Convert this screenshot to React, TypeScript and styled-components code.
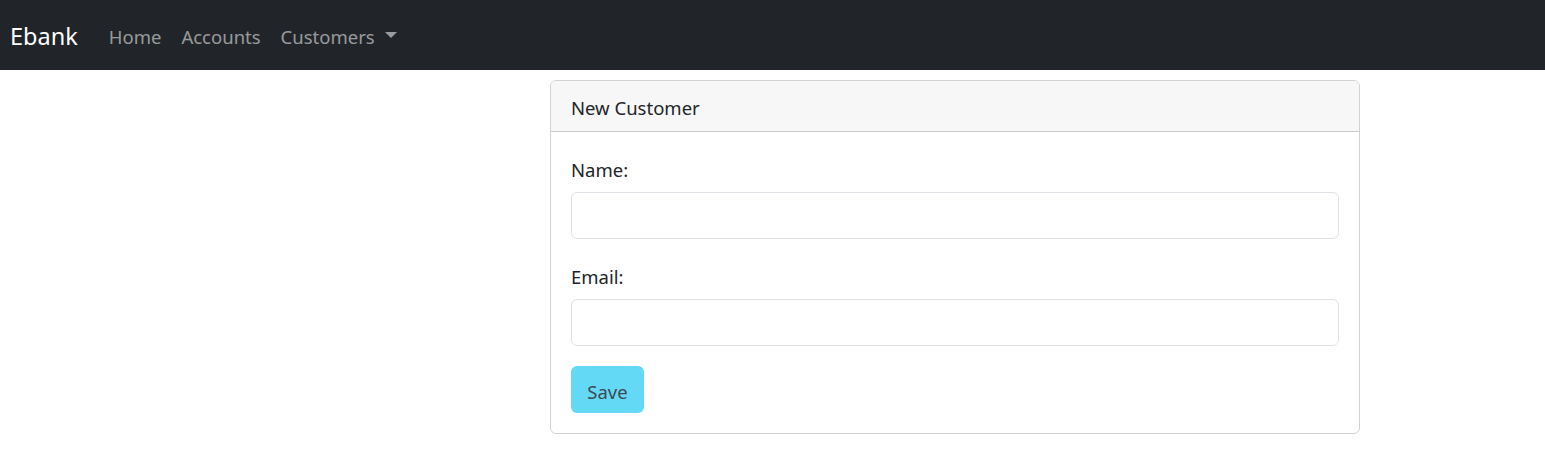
import React from 'react'
import styled, { createGlobalStyle } from 'styled-components'

const GlobalStyle = createGlobalStyle`
    body {
        margin: 0;
        font-family: "Noto Sans", "Open Sans", sans-serif;
        font-size: 18.5px;
        color: #212529;
        background: #fff;
    }
    * { box-sizing: border-box; }
`

const NavBar = styled.nav`
    height: 70px;
    background: #212529;
    display: flex;
    align-items: center;
    padding: 2px 10px 0;
`

const Brand = styled.a`
    color: #fff;
    font-size: 23.5px;
    text-decoration: none;
    margin-right: 21px;
`

const NavLink = styled.a`
    color: rgba(255, 255, 255, 0.55);
    text-decoration: none;
    padding: 0 10px;
    display: flex;
    align-items: center;
`

const Caret = styled.span`
    display: inline-block;
    margin-left: 10px;
    border-top: 6px solid rgba(255, 255, 255, 0.55);
    border-left: 6px solid transparent;
    border-right: 6px solid transparent;
    margin-top: -3px;
`

const Main = styled.main`
    padding: 10px 185px 0 550px;
`

const Card = styled.div`
    border: 1px solid rgba(0, 0, 0, 0.175);
    border-radius: 6px;
    overflow: hidden;
`

const CardHeader = styled.div`
    background: #f7f7f7;
    border-bottom: 1px solid rgba(0, 0, 0, 0.175);
    height: 51px;
    padding: 3px 20px 0;
    display: flex;
    align-items: center;
`

const CardBody = styled.form`
    padding: 24px 20px 20px;
    display: flex;
    flex-direction: column;
`

const Label = styled.label`
    line-height: 27px;
    margin-bottom: 9px;
`

const Input = styled.input`
    height: 47px;
    border: 1px solid #dee2e6;
    border-radius: 6px;
    font: inherit;
    padding: 0 14px;
    margin-bottom: 24px;
    &:last-of-type { margin-bottom: 20px; }
`

const SaveButton = styled.button`
    align-self: flex-start;
    width: 73px;
    height: 47px;
    padding: 3px 0 0;
    border: none;
    border-radius: 6px;
    background: #64d9f5;
    color: #3c4a55;
    font: inherit;
`

function App() {
    return (
        <>
            <GlobalStyle />
            <NavBar>
                <Brand href="#">Ebank</Brand>
                <NavLink href="#">Home</NavLink>
                <NavLink href="#">Accounts</NavLink>
                <NavLink href="#">Customers<Caret /></NavLink>
            </NavBar>
            <Main>
                <Card>
                    <CardHeader>New Customer</CardHeader>
                    <CardBody>
                        <Label>Name:</Label>
                        <Input type="text" />
                        <Label>Email:</Label>
                        <Input type="text" />
                        <SaveButton type="button">Save</SaveButton>
                    </CardBody>
                </Card>
            </Main>
        </>
    )
}

export default App
